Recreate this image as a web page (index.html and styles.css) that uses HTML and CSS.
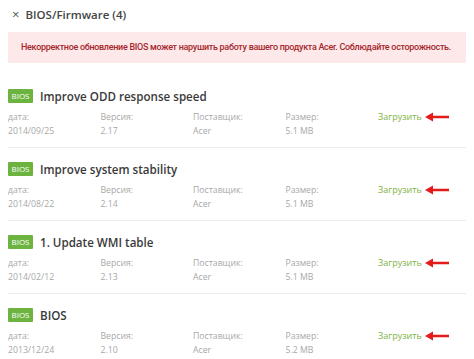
FILE: index.html
```html
<!DOCTYPE html>
<html lang="ru">
<head>
  <meta charset="UTF-8" />
  <title>BIOS/Firmware</title>
  <link rel="stylesheet" href="styles.css">
</head>
<body>
  <div class="panel">
    <div class="panel-head">
      <span class="close">&times;</span>
      <span class="panel-title">BIOS/Firmware (4)</span>
    </div>

    <div class="alert">Некорректное обновление BIOS может нарушить работу вашего продукта Acer. Соблюдайте осторожность.</div>

    <div class="list">
      <div class="item">
        <div class="item-head">
          <span class="badge">BIOS</span>
          <span class="item-title">Improve ODD response speed</span>
        </div>
        <div class="item-info">
          <div class="cell"><span class="label">дата:</span><span class="value">2014/09/25</span></div>
          <div class="cell"><span class="label">Версия:</span><span class="value">2.17</span></div>
          <div class="cell"><span class="label">Поставщик:</span><span class="value">Acer</span></div>
          <div class="cell"><span class="label">Размер:</span><span class="value">5.1 MB</span></div>
          <div class="cell download">
            <a href="#">Загрузить</a>
            <svg class="arrow" width="24" height="10" viewBox="0 0 24 10"><path d="M0 5 L8 0.5 L8 3.8 L24 3.8 L24 6.2 L8 6.2 L8 9.5 Z" fill="#e31b1b"/></svg>
          </div>
        </div>
      </div>

      <div class="item">
        <div class="item-head">
          <span class="badge">BIOS</span>
          <span class="item-title">Improve system stability</span>
        </div>
        <div class="item-info">
          <div class="cell"><span class="label">дата:</span><span class="value">2014/08/22</span></div>
          <div class="cell"><span class="label">Версия:</span><span class="value">2.14</span></div>
          <div class="cell"><span class="label">Поставщик:</span><span class="value">Acer</span></div>
          <div class="cell"><span class="label">Размер:</span><span class="value">5.1 MB</span></div>
          <div class="cell download">
            <a href="#">Загрузить</a>
            <svg class="arrow" width="24" height="10" viewBox="0 0 24 10"><path d="M0 5 L8 0.5 L8 3.8 L24 3.8 L24 6.2 L8 6.2 L8 9.5 Z" fill="#e31b1b"/></svg>
          </div>
        </div>
      </div>

      <div class="item">
        <div class="item-head">
          <span class="badge">BIOS</span>
          <span class="item-title">1. Update WMI table</span>
        </div>
        <div class="item-info">
          <div class="cell"><span class="label">дата:</span><span class="value">2014/02/12</span></div>
          <div class="cell"><span class="label">Версия:</span><span class="value">2.13</span></div>
          <div class="cell"><span class="label">Поставщик:</span><span class="value">Acer</span></div>
          <div class="cell"><span class="label">Размер:</span><span class="value">5.1 MB</span></div>
          <div class="cell download">
            <a href="#">Загрузить</a>
            <svg class="arrow" width="24" height="10" viewBox="0 0 24 10"><path d="M0 5 L8 0.5 L8 3.8 L24 3.8 L24 6.2 L8 6.2 L8 9.5 Z" fill="#e31b1b"/></svg>
          </div>
        </div>
      </div>

      <div class="item">
        <div class="item-head">
          <span class="badge">BIOS</span>
          <span class="item-title">BIOS</span>
        </div>
        <div class="item-info">
          <div class="cell"><span class="label">дата:</span><span class="value">2013/12/24</span></div>
          <div class="cell"><span class="label">Версия:</span><span class="value">2.10</span></div>
          <div class="cell"><span class="label">Поставщик:</span><span class="value">Acer</span></div>
          <div class="cell"><span class="label">Размер:</span><span class="value">5.2 MB</span></div>
          <div class="cell download">
            <a href="#">Загрузить</a>
            <svg class="arrow" width="24" height="10" viewBox="0 0 24 10"><path d="M0 5 L8 0.5 L8 3.8 L24 3.8 L24 6.2 L8 6.2 L8 9.5 Z" fill="#e31b1b"/></svg>
          </div>
        </div>
      </div>
    </div>
  </div>
</body>
</html>
```

FILE: styles.css
```css
body {
  margin: 0;
  background: #fff;
  font-family: 'Open Sans', 'DejaVu Sans', sans-serif;
  color: #333;
}
.panel {
  padding: 4px 8px 0;
}
.panel-head {
  display: flex;
  align-items: center;
  gap: 6px;
  height: 20px;
  padding-left: 4px;
}
.close {
  font-size: 13px;
  color: #555;
  line-height: 1;
}
.panel-title {
  font-size: 11.5px;
  font-weight: 600;
  color: #444;
}
.alert {
  margin-top: 8px;
  height: 31px;
  line-height: 31px;
  padding: 0 13px;
  background: #fde8ea;
  color: #a5282c;
  font-family: Roboto, 'Open Sans', sans-serif;
  font-size: 9px;
  font-weight: 500;
  letter-spacing: -0.3px;
  white-space: nowrap;
  overflow: hidden;
}
.list {
  margin-top: 12px;
}
.item {
  padding: 14px 0 9px;
  border-bottom: 1px solid #ececec;
}
.item-head {
  display: flex;
  align-items: center;
  gap: 7px;
  height: 14px;
}
.badge {
  display: inline-block;
  width: 25px;
  height: 14px;
  line-height: 14px;
  text-align: center;
  background: #6db33f;
  color: #fff;
  font-size: 8px;
  border-radius: 1px;
}
.item-title {
  font-size: 11.6px;
  font-weight: 600;
  color: #3a3a3a;
}
.item-info {
  display: grid;
  grid-template-columns: repeat(4, 92.5px) 1fr;
  margin-top: 7px;
}
.cell {
  display: flex;
  flex-direction: column;
  font-size: 8.7px;
  line-height: 14px;
}
.label,
.value {
  color: #a8a8a8;
}
.download {
  flex-direction: row;
  align-items: center;
  height: 14px;
  gap: 3px;
}
.download a {
  color: #7cb342;
  text-decoration: none;
  font-size: 9px;
}
.arrow {
  display: block;
}
```
